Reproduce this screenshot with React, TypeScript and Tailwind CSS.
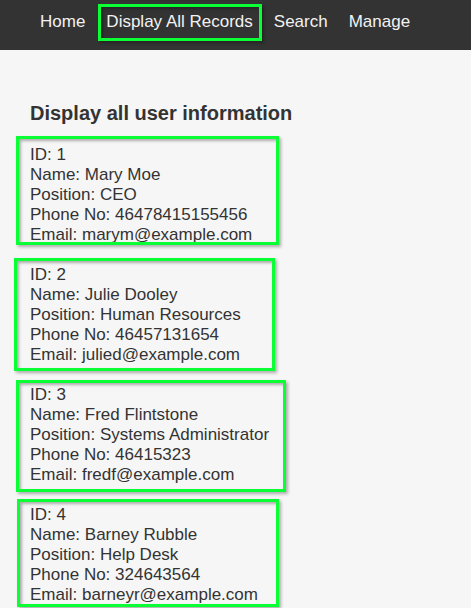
import React from "react";

const records = [
  { id: 1, name: "Mary Moe", position: "CEO", phone: "46478415155456", email: "marym@example.com" },
  { id: 2, name: "Julie Dooley", position: "Human Resources", phone: "46457131654", email: "julied@example.com" },
  { id: 3, name: "Fred Flintstone", position: "Systems Administrator", phone: "46415323", email: "fredf@example.com" },
  { id: 4, name: "Barney Rubble", position: "Help Desk", phone: "324643564", email: "barneyr@example.com" },
];

const boxCls =
  "pointer-events-none absolute border-[3px] border-[#0aff35] shadow-[2px_2px_3px_rgba(0,0,0,0.3),inset_2px_2px_3px_rgba(0,0,0,0.3)]";

export default function App() {
  return (
    <div
      className="relative min-h-[608px] w-[471px] overflow-hidden bg-[#f6f6f6] text-[#333]"
      style={{ fontFamily: '"Liberation Sans", Arial, sans-serif' }}
    >
      <nav className="flex h-[50px] items-start gap-[21px] bg-[#333] pl-[40px] pt-[12px] text-[17px] leading-[20px] text-[#f2f2f2]">
        <span>Home</span>
        <span>Display All Records</span>
        <span>Search</span>
        <span>Manage</span>
      </nav>
      <main className="px-[30px] pt-[51px]">
        <h2 className="text-[20px] font-bold leading-[24px]">Display all user information</h2>
        <div className="mt-[20px] flex flex-col gap-[20px] text-[17px] leading-[20px]">
          {records.map((r) => (
            <div key={r.id}>
              <div>ID: {r.id}</div>
              <div>Name: {r.name}</div>
              <div>Position: {r.position}</div>
              <div>Phone No: {r.phone}</div>
              <div>Email: {r.email}</div>
            </div>
          ))}
        </div>
      </main>
      <div className={`${boxCls} left-[98px] top-[4px] h-[37px] w-[164px]`} />
      <div className={`${boxCls} left-[16px] top-[136px] h-[109px] w-[263px]`} />
      <div className={`${boxCls} left-[14px] top-[258px] h-[113px] w-[261px]`} />
      <div className={`${boxCls} left-[16px] top-[380px] h-[112px] w-[270px]`} />
      <div className={`${boxCls} left-[17px] top-[499px] h-[108px] w-[262px]`} />
    </div>
  );
}
